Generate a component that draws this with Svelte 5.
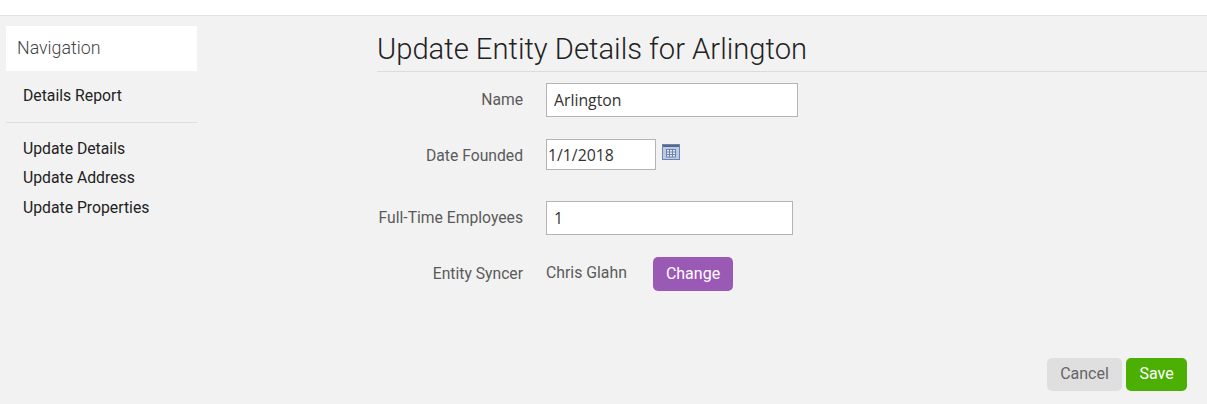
<script>
  const reports = ['Details Report'];
  const updates = ['Update Details', 'Update Address', 'Update Properties'];
</script>

<div class="page">
  <header class="topbar"></header>
  <div class="body">
    <nav class="sidebar">
      <h2 class="nav-title">Navigation</h2>
      <ul class="nav-list first">
        {#each reports as r}<li>{r}</li>{/each}
      </ul>
      <hr class="nav-rule" />
      <ul class="nav-list">
        {#each updates as u}<li>{u}</li>{/each}
      </ul>
    </nav>
    <main class="main">
      <h1 class="title">Update Entity Details for Arlington</h1>
      <form class="form">
        <div class="row row-name">
          <span class="label up">Name</span>
          <input class="input w-name" value="Arlington" />
        </div>
        <div class="row row-date">
          <span class="label down">Date Founded</span>
          <input class="input w-date" value="1/1/2018" />
          <svg class="cal" width="18" height="16" viewBox="0 0 18 16" aria-hidden="true">
            <rect x="0.5" y="0.5" width="17" height="15" fill="#bccae4" stroke="#6f84ad" />
            <rect x="1" y="1" width="16" height="2" fill="#52688f" />
            <rect x="4" y="5" width="10" height="8" fill="#e9eef7" />
            <path d="M4 5.5h10M4 8h10M4 10.5h10M4 13h10M4.5 5v8M7.5 5v8M10.5 5v8M13.5 5v8" stroke="#6a83b3" stroke-width="1" fill="none" />
          </svg>
        </div>
        <div class="row row-emp">
          <span class="label up">Full-Time Employees</span>
          <input class="input w-emp" value="1" />
        </div>
        <div class="row row-sync">
          <span class="label up">Entity Syncer</span>
          <span class="value">Chris Glahn</span>
          <button type="button" class="btn change">Change</button>
        </div>
      </form>
      <div class="actions">
        <button type="button" class="btn cancel">Cancel</button>
        <button type="button" class="btn save">Save</button>
      </div>
    </main>
  </div>
</div>

<style>
  :global(body) {
    margin: 0;
    background: #f2f2f2;
  }
  .page {
    font-family: Roboto, "Liberation Sans", sans-serif;
    height: 404px;
    overflow: hidden;
    background: #f2f2f2;
  }
  .topbar {
    height: 15px;
    background: #fff;
    border-bottom: 1px solid #e2e2e2;
  }
  .body {
    display: flex;
  }
  .sidebar {
    width: 191px;
    margin-left: 6px;
    padding-top: 10px;
    flex: none;
  }
  .nav-title {
    margin: 0;
    height: 45px;
    line-height: 44px;
    padding-left: 11px;
    background: #fff;
    font-size: 17.8px;
    font-weight: 300;
    color: #444;
  }
  .nav-list {
    list-style: none;
    margin: 0;
    padding: 0 0 0 17px;
    font-size: 15.75px;
    color: #222;
  }
  .nav-list li {
    height: 29.5px;
    line-height: 29px;
  }
  .nav-list.first {
    padding-top: 10px;
  }
  .nav-rule {
    border: 0;
    border-top: 1px solid #dedede;
    margin: 11px 0 11px;
  }
  .main {
    flex: 1;
    margin-left: 180px;
    min-width: 0;
  }
  .title {
    margin: 0;
    padding: 15px 0 4px 0;
    height: 36px;
    line-height: 36px;
    font-size: 29.2px;
    font-weight: 300;
    color: #222;
    border-bottom: 1px solid #dcdcdc;
  }
  .form {
    display: flex;
    flex-direction: column;
  }
  .row {
    display: flex;
    align-items: center;
  }
  .row-name { margin-top: 11px; height: 34px; }
  .row-date { margin-top: 22px; height: 31px; }
  .row-emp { margin-top: 31px; height: 34px; }
  .row-sync { margin-top: 22px; height: 34px; }
  .label {
    width: 146px;
    flex: none;
    text-align: right;
    font-size: 15.7px;
    white-space: nowrap;
    color: #5a5a5a;
    margin-right: 23px;
  }
  .label.up { padding-bottom: 2px; }
  .label.down { padding-top: 2px; }
  .input {
    box-sizing: border-box;
    height: 100%;
    border: 1px solid #b4b4b4;
    background: #fff;
    font-family: "Open Sans", sans-serif;
    font-size: 15.8px;
    color: #333;
    padding: 0 7px;
    outline: none;
    border-radius: 0;
  }
  .w-name { width: 252px; }
  .w-date { width: 110px; padding: 0 1px; }
  .w-emp { width: 247px; }
  .cal {
    margin-left: 6px;
    margin-bottom: 6px;
  }
  .value {
    font-size: 15.8px;
    color: #5a5a5a;
    margin-right: 26px;
    padding-bottom: 3px;
    width: 81px;
    white-space: nowrap;
  }
  .btn {
    border: 0;
    border-radius: 5px;
    font-family: Roboto, sans-serif;
    font-size: 16px;
    padding: 0 0 2px;
    cursor: pointer;
  }
  .change {
    width: 80px;
    height: 34px;
    background: #9b59b6;
    color: #fff;
  }
  .actions {
    display: flex;
    justify-content: flex-end;
    gap: 4px;
    margin-top: 67px;
    padding-right: 20px;
  }
  .cancel {
    width: 75px;
    height: 33px;
    background: #dfdfdf;
    color: #666;
  }
  .save {
    width: 61px;
    height: 33px;
    background: #4caf04;
    color: #fff;
  }
</style>
